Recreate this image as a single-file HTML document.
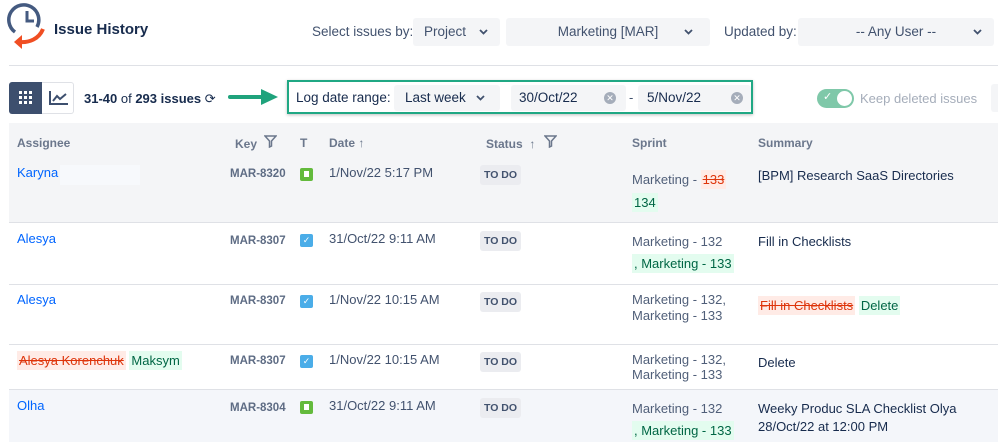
<!DOCTYPE html>
<html><head><meta charset="utf-8"><style>
*{box-sizing:border-box;margin:0;padding:0}
body{width:998px;height:442px;overflow:hidden;background:#fff;font-family:"Liberation Sans",sans-serif;color:#42526e;position:relative;font-size:13px}
.a{position:absolute;white-space:nowrap}
.sel{position:absolute;background:#f4f5f7;border-radius:3px;height:28px;line-height:28px;font-size:13.5px;color:#42526e}
.chev{position:absolute;right:12px;top:11px;width:9px;height:6px}
.hdr{font-weight:bold;font-size:12px;color:#6b778c}
.lnk{color:#0065ff;font-size:13px}
.key{font-weight:bold;font-size:11.5px;color:#5e6c84}
.dt{font-size:13px;color:#42526e}
.todo{background:#ebecf0;border-radius:3px;font-weight:bold;font-size:10.5px;color:#42526e;padding:0 4px;height:20px;line-height:20px}
.sp{font-size:13px;color:#505f79}
.sm{font-size:13px;color:#172b4d}
.del{background:#ffebe6;color:#de350b;text-decoration:line-through;padding:2px 2px}
.add{background:#e3fcef;color:#006644;padding:2px 2px}
.ic{width:13px;height:13px;border-radius:2px}
</style></head><body>
<svg class="a" style="left:5px;top:3px" width="40" height="46" viewBox="0 0 40 46">
<path d="M10 29 A15 15 0 1 1 32 24" fill="none" stroke="#445a80" stroke-width="3.5"/>
<path d="M22 8 V18 H29" fill="none" stroke="#445a80" stroke-width="3"/>
<path d="M38 26 C34 36 24 40 14 39" fill="none" stroke="#f04e23" stroke-width="4"/>
<path d="M17 32 L9 39 L17 46 Z" fill="#f04e23"/>
</svg>
<div class="a" style="left:54px;top:21px;font-weight:bold;font-size:15px;color:#172b4d">Issue History</div>
<div class="a" style="left:312px;top:24px;font-size:13.5px;color:#42526e">Select issues by:</div>
<div class="sel" style="left:413px;top:18px;width:87px;padding-left:11px">Project<svg class="chev" viewBox="0 0 9 6"><path d="M1 1L4.5 4.5L8 1" fill="none" stroke="#42526e" stroke-width="1.8"/></svg></div>
<div class="sel" style="left:506px;top:18px;width:204px;text-align:center">Marketing [MAR]<svg class="chev" style="right:17px" viewBox="0 0 9 6"><path d="M1 1L4.5 4.5L8 1" fill="none" stroke="#42526e" stroke-width="1.8"/></svg></div>
<div class="a" style="left:724px;top:24px;font-size:13.5px;color:#42526e">Updated by:</div>
<div class="sel" style="left:798px;top:18px;width:196px;text-align:center">-- Any User --<svg class="chev" viewBox="0 0 9 6"><path d="M1 1L4.5 4.5L8 1" fill="none" stroke="#42526e" stroke-width="1.8"/></svg></div>
<div class="a" style="left:9px;top:65px;width:989px;height:1px;background:#dfe1e6"></div>
<div class="a" style="left:9px;top:82px;width:33px;height:32px;background:#3d4f6e;border-radius:3px 0 0 3px"></div>
<svg class="a" style="left:19px;top:91px" width="14" height="14"><g fill="#fff"><rect x="0" y="0" width="3" height="3"/><rect x="5" y="0" width="3" height="3"/><rect x="10" y="0" width="3" height="3"/><rect x="0" y="5" width="3" height="3"/><rect x="5" y="5" width="3" height="3"/><rect x="10" y="5" width="3" height="3"/><rect x="0" y="10" width="3" height="3"/><rect x="5" y="10" width="3" height="3"/><rect x="10" y="10" width="3" height="3"/></g></svg>
<div class="a" style="left:42px;top:82px;width:32px;height:32px;border:1px solid #dfe1e6;border-left:none;border-radius:0 3px 3px 0"></div>
<svg class="a" style="left:49px;top:90px" width="20" height="16"><path d="M1 1V14H19" fill="none" stroke="#3d4f6e" stroke-width="2"/><path d="M4 11L8 6L11 9L17 4" fill="none" stroke="#3d4f6e" stroke-width="2"/></svg>
<div class="a" style="left:84px;top:91px;font-size:13px;color:#172b4d"><b>31-40</b> of <b>293 issues</b> ⟳</div>
<svg class="a" style="left:228px;top:87px" width="52" height="20"><path d="M2 10H36" stroke="#1fa37c" stroke-width="4" stroke-linecap="round"/><path d="M33 2L50 10L33 18Z" fill="#1fa37c"/></svg>
<div class="a" style="left:287px;top:80px;width:466px;height:34px;border:2px solid #20a884;box-shadow:0 1px 3px rgba(0,0,0,.25)"></div>
<div class="a" style="left:296px;top:90px;font-size:13.5px;color:#172b4d">Log date range:</div>
<div class="sel" style="left:394px;top:85px;width:106px;padding-left:11px;height:26px;line-height:26px;color:#172b4d">Last week<svg class="chev" style="right:15px;top:10px" viewBox="0 0 9 6"><path d="M1 1L4.5 4.5L8 1" fill="none" stroke="#42526e" stroke-width="1.8"/></svg></div>
<div class="sel" style="left:511px;top:85px;width:115px;padding-left:8px;height:26px;line-height:26px;color:#172b4d">30/Oct/22<span class="a" style="right:10px;top:7px;width:12px;height:12px;border-radius:6px;background:#a5adba;color:#fff;font-size:9px;line-height:12px;text-align:center">✕</span></div>
<div class="a" style="left:629px;top:90px;color:#42526e">-</div>
<div class="sel" style="left:638px;top:85px;width:113px;padding-left:9px;height:26px;line-height:26px;color:#172b4d">5/Nov/22<span class="a" style="right:8px;top:7px;width:12px;height:12px;border-radius:6px;background:#a5adba;color:#fff;font-size:9px;line-height:12px;text-align:center">✕</span></div>
<div class="a" style="left:817px;top:89px;width:37px;height:19px;border-radius:10px;background:#7fc8a9"></div>
<div class="a" style="left:837px;top:91px;width:15px;height:15px;border-radius:8px;background:#fff"></div>
<div class="a" style="left:823px;top:90px;color:#fff;font-size:11px">✓</div>
<div class="a" style="left:860px;top:91px;font-size:13px;color:#a5adba">Keep deleted issues</div>
<div class="a" style="left:991px;top:84px;width:10px;height:28px;background:#f4f5f7;border-radius:3px"></div>
<!-- table -->
<div class="a" style="left:9px;top:123px;width:989px;height:37px;background:#f4f5f7"></div>
<div class="a hdr" style="left:17px;top:136px">Assignee</div>
<div class="a hdr" style="left:235px;top:137px">Key</div>
<svg class="a" style="left:264px;top:135px" width="13" height="13"><path d="M1 1H12L7.5 6V11L5.5 12V6Z" fill="none" stroke="#6b778c" stroke-width="1.5"/></svg>
<div class="a hdr" style="left:300px;top:136px">T</div>
<div class="a hdr" style="left:329px;top:136px">Date ↑</div>
<div class="a hdr" style="left:486px;top:137px">Status &nbsp;↑</div>
<svg class="a" style="left:544px;top:135px" width="13" height="13"><path d="M1 1H12L7.5 6V11L5.5 12V6Z" fill="none" stroke="#6b778c" stroke-width="1.5"/></svg>
<div class="a hdr" style="left:632px;top:136px">Sprint</div>
<div class="a hdr" style="left:758px;top:136px">Summary</div>
<div class="a" style="left:9px;top:160px;width:989px;height:63px;background:#f4f5f7;border-bottom:1px solid #dfe1e6"></div>
<div class="a" style="left:9px;top:223px;width:989px;height:62px;border-bottom:1px solid #dfe1e6"></div>
<div class="a" style="left:9px;top:285px;width:989px;height:60px;border-bottom:1px solid #dfe1e6"></div>
<div class="a" style="left:9px;top:345px;width:989px;height:45px;border-bottom:1px solid #dfe1e6"></div>
<div class="a" style="left:9px;top:390px;width:989px;height:52px;background:#f4f6fa"></div>
<!-- row1 -->
<div class="a lnk" style="left:17px;top:165px">Karyna</div>
<div class="a" style="left:60px;top:165px;width:80px;height:20px;background:#f7f9fc"></div>
<div class="a key" style="left:230px;top:168px">MAR-8320</div>
<div class="a ic" style="left:300px;top:168px;background:#63ba3c"><div style="margin:3px 4px;width:5px;height:6px;background:#fff"></div></div>
<div class="a dt" style="left:329px;top:165px">1/Nov/22 5:17 PM</div>
<div class="a todo" style="left:480px;top:165px">TO DO</div>
<div class="a sp" style="left:632px;top:172px">Marketing - <span class="del">133</span></div>
<div class="a sp" style="left:632px;top:195px"><span class="add">134</span></div>
<div class="a sm" style="left:758px;top:168px">[BPM] Research SaaS Directories</div>
<!-- row2 -->
<div class="a lnk" style="left:17px;top:231px">Alesya</div>
<div class="a key" style="left:230px;top:235px">MAR-8307</div>
<div class="a ic" style="left:300px;top:234px;background:#4bade8;color:#fff;font-size:9px;text-align:center;line-height:13px">✓</div>
<div class="a dt" style="left:329px;top:231px">31/Oct/22 9:11 AM</div>
<div class="a todo" style="left:480px;top:231px">TO DO</div>
<div class="a sp" style="left:632px;top:234px">Marketing - 132</div>
<div class="a sp" style="left:632px;top:256px"><span class="add">, Marketing - 133</span></div>
<div class="a sm" style="left:758px;top:234px">Fill in Checklists</div>
<!-- row3 -->
<div class="a lnk" style="left:17px;top:292px">Alesya</div>
<div class="a key" style="left:230px;top:295px">MAR-8307</div>
<div class="a ic" style="left:300px;top:295px;background:#4bade8;color:#fff;font-size:9px;text-align:center;line-height:13px">✓</div>
<div class="a dt" style="left:329px;top:292px">1/Nov/22 10:15 AM</div>
<div class="a todo" style="left:480px;top:292px">TO DO</div>
<div class="a sp" style="left:632px;top:292px">Marketing - 132,</div>
<div class="a sp" style="left:632px;top:308px">Marketing - 133</div>
<div class="a sm" style="left:758px;top:298px"><span class="del">Fill in Checklists</span> <span class="add">Delete</span></div>
<!-- row4 -->
<div class="a" style="left:17px;top:353px;font-size:13px"><span class="del">Alesya Korenchuk</span> <span class="add">Maksym</span></div>
<div class="a key" style="left:230px;top:355px">MAR-8307</div>
<div class="a ic" style="left:300px;top:355px;background:#4bade8;color:#fff;font-size:9px;text-align:center;line-height:13px">✓</div>
<div class="a dt" style="left:329px;top:352px">1/Nov/22 10:15 AM</div>
<div class="a todo" style="left:480px;top:352px">TO DO</div>
<div class="a sp" style="left:632px;top:352px">Marketing - 132,</div>
<div class="a sp" style="left:632px;top:367px">Marketing - 133</div>
<div class="a sm" style="left:758px;top:355px">Delete</div>
<!-- row5 -->
<div class="a lnk" style="left:17px;top:398px">Olha</div>
<div class="a key" style="left:230px;top:402px">MAR-8304</div>
<div class="a ic" style="left:300px;top:401px;background:#63ba3c"><div style="margin:3px 4px;width:5px;height:6px;background:#fff"></div></div>
<div class="a dt" style="left:329px;top:398px">31/Oct/22 9:11 AM</div>
<div class="a todo" style="left:480px;top:398px">TO DO</div>
<div class="a sp" style="left:632px;top:401px">Marketing - 132</div>
<div class="a sp" style="left:632px;top:423px"><span class="add">, Marketing - 133</span></div>
<div class="a sm" style="left:758px;top:401px">Weeky Produc SLA Checklist Olya</div>
<div class="a sm" style="left:758px;top:419px">28/Oct/22 at 12:00 PM</div>
</body></html>
